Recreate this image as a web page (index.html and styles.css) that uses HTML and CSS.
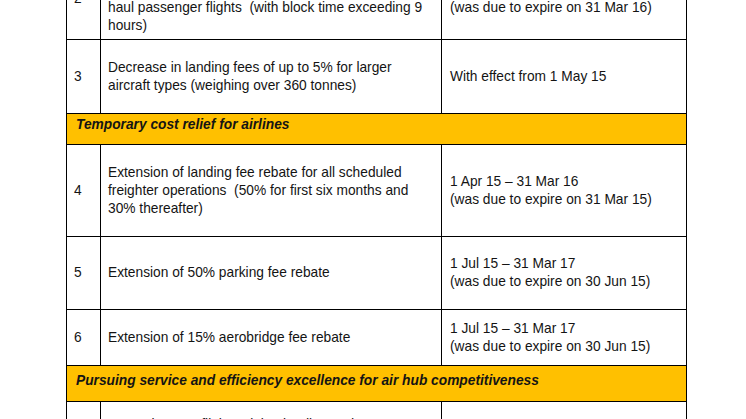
FILE: index.html
```html
<!DOCTYPE html>
<html lang="en">
<head>
<meta charset="utf-8">
<title>Airport charges relief measures</title>
<link rel="stylesheet" href="styles.css">
</head>
<body>
<div class="page">
  <table class="measures">
    <colgroup>
      <col class="c-no">
      <col class="c-desc">
      <col class="c-date">
    </colgroup>
    <tbody>
      <tr class="r2">
        <td class="no">2</td>
        <td class="desc">Extension of 15% landing fee rebate for<br>scheduled ultra-long-<br>haul passenger flights&nbsp; (with block time exceeding 9<br>hours)</td>
        <td class="date">1 Apr 16 – 31 Mar 17<br>(was due to expire on 31 Mar 16)</td>
      </tr>
      <tr class="r3">
        <td class="no">3</td>
        <td class="desc">Decrease in landing fees of up to 5% for larger<br>aircraft types (weighing over 360 tonnes)</td>
        <td class="date">With effect from 1 May 15</td>
      </tr>
      <tr class="section s1">
        <td colspan="3">Temporary cost relief for airlines</td>
      </tr>
      <tr class="r4">
        <td class="no">4</td>
        <td class="desc">Extension of landing fee rebate for all scheduled<br>freighter operations&nbsp; (50% for first six months and<br>30% thereafter)</td>
        <td class="date">1 Apr 15 – 31 Mar 16<br>(was due to expire on 31 Mar 15)</td>
      </tr>
      <tr class="r5">
        <td class="no">5</td>
        <td class="desc">Extension of 50% parking fee rebate</td>
        <td class="date">1 Jul 15 – 31 Mar 17<br>(was due to expire on 30 Jun 15)</td>
      </tr>
      <tr class="r6">
        <td class="no">6</td>
        <td class="desc">Extension of 15% aerobridge fee rebate</td>
        <td class="date">1 Jul 15 – 31 Mar 17<br>(was due to expire on 30 Jun 15)</td>
      </tr>
      <tr class="section s2">
        <td colspan="3">Pursuing service and efficiency excellence for air hub competitiveness</td>
      </tr>
      <tr class="r7">
        <td class="no">7</td>
        <td class="desc">30% rebate on flight training landing and<br>parking fees</td>
        <td class="date">1 Mar 15 – 31 Mar 17<br>(new measure)</td>
      </tr>
    </tbody>
  </table>
</div>
</body>
</html>
```

FILE: styles.css
```css
html, body {
  margin: 0;
  padding: 0;
  background: #ffffff;
}

.page {
  margin-top: -42px;
  padding-left: 66px;
}

.measures {
  border-collapse: collapse;
  table-layout: fixed;
  width: 620px;
  font-family: "Liberation Sans", Arial, sans-serif;
  font-size: 13.75px;
  line-height: 18px;
  color: #141414;
}

.c-no { width: 34px; }
.c-desc { width: 341px; }
.c-date { width: 245px; }

.measures td {
  border: 1px solid #000;
  padding: 0 7px;
  vertical-align: middle;
  white-space: nowrap;
  overflow: hidden;
}

.measures td.date {
  padding-left: 8px;
}

.r2 { height: 81px; }
.r3 { height: 74px; }
.r4 { height: 92px; }
.r5 { height: 73px; }
.r6 { height: 56px; }

.section td {
  background: #ffc000;
  font-weight: bold;
  font-style: italic;
  padding-left: 9px;
  vertical-align: top;
}

.s1 td {
  height: 30px;
  padding-top: 2px;
  padding-bottom: 10px;
  box-sizing: border-box;
}

.s2 td {
  height: 35px;
  padding-top: 6px;
  padding-bottom: 11px;
  box-sizing: border-box;
}

.r7 td {
  vertical-align: top;
  padding-top: 14px;
  height: 80px;
}
```
